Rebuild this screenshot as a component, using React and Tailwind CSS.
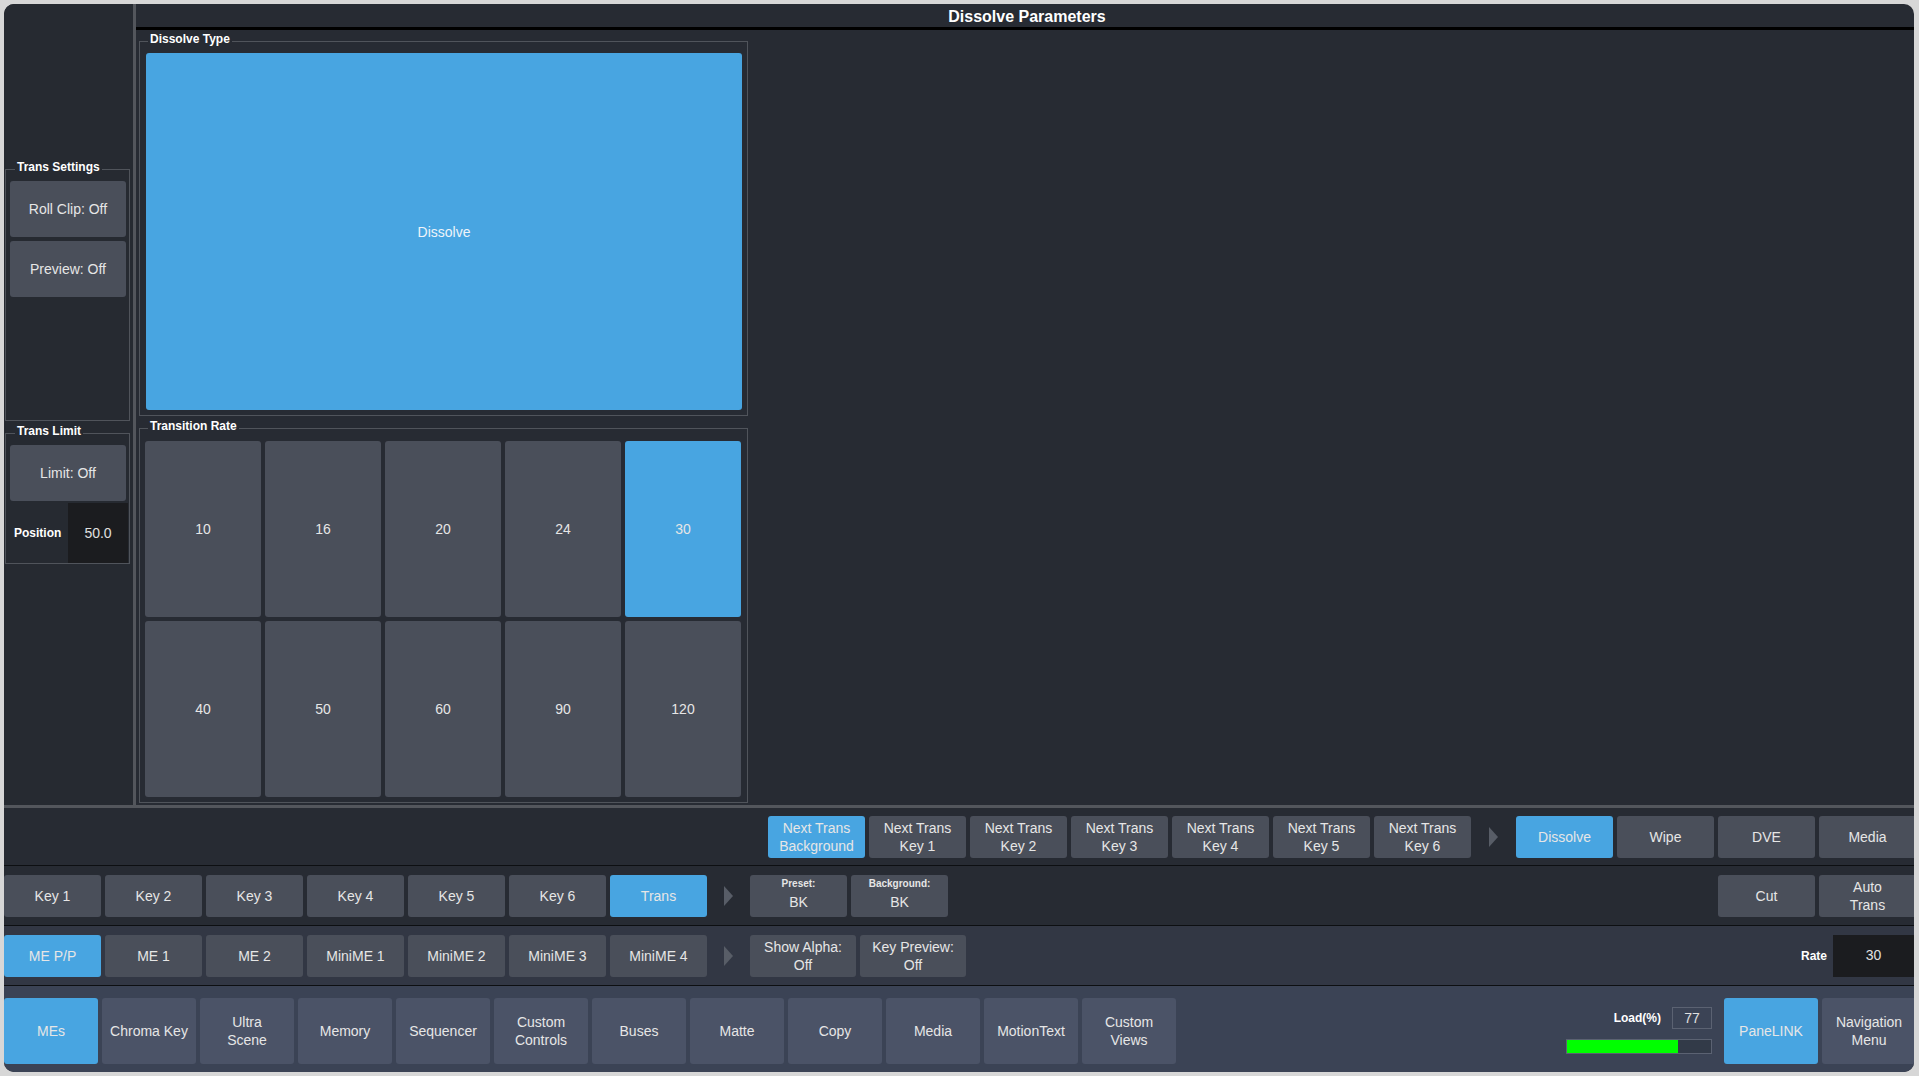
import React from "react";

const nextTrans = ["Background", "Key 1", "Key 2", "Key 3", "Key 4", "Key 5", "Key 6"];
const keys = ["Key 1", "Key 2", "Key 3", "Key 4", "Key 5", "Key 6"];
const mes = ["ME 1", "ME 2", "MiniME 1", "MiniME 2", "MiniME 3", "MiniME 4"];
const rates = [10, 16, 20, 24, 30, 40, 50, 60, 90, 120];
const menus = [
    ["Chroma Key"],
    ["Ultra", "Scene"],
    ["Memory"],
    ["Sequencer"],
    ["Custom", "Controls"],
    ["Buses"],
    ["Matte"],
    ["Copy"],
    ["Media"],
    ["MotionText"],
    ["Custom", "Views"],
];

function Btn({ children, active = false, nav = false, top = false, className = "" }) {
    const tone = active ? "bg-[#48a5e1]" : nav ? "bg-[#4b5367]" : "bg-[#4a4f5a]";
    const align = top ? "justify-start pt-[3px]" : "justify-center";
    return (
        <button
            className={`${tone} ${align} ${className} shrink-0 rounded-[3px] flex flex-col items-center text-center text-[14px] leading-[18px] text-[#e6e6e6]`}
        >
            {children}
        </button>
    );
}

function Arrow({ wide = false }) {
    return (
        <div className={`${wide ? "w-[37px]" : "w-[35px]"} shrink-0 flex items-center justify-center`}>
            <svg width="9" height="20" viewBox="0 0 9 20">
                <path d="M0 0 L9 10 L0 20 Z" fill="#585d67" />
            </svg>
        </div>
    );
}

// label sits a little above the frame line, as in the original panel
function Legend({ children, className = "" }) {
    return (
        <legend className={`${className} px-[2px] pb-[4px] text-[12px] leading-[14px] font-bold text-white`}>
            {children}
        </legend>
    );
}

export default function App() {
    return (
        <div className="w-[1919px] h-[1076px] bg-[#d7d7d7] pt-[4px] pl-[4px] font-['Liberation_Sans',Arial,sans-serif]">
            <div className="w-[1910px] h-[1068px] rounded-[10px] overflow-hidden bg-[#272b33] flex flex-col">
                {/* Upper area: side panel + parameters */}
                <div className="h-[801px] flex">
                    <aside className="w-[129px] bg-[#262a31] flex flex-col pl-[1px] pt-[156px]">
                        <fieldset className="w-[125px] h-[261px] border border-[#50545b] pl-[4px] pr-[1px] pt-[3px]">
                            <Legend className="ml-[5px]">Trans Settings</Legend>
                            <div className="flex flex-col gap-[4px]">
                                <Btn className="w-[116px] h-[56px]">Roll Clip: Off</Btn>
                                <Btn className="w-[116px] h-[56px]">Preview: Off</Btn>
                            </div>
                        </fieldset>
                        <fieldset className="mt-[3px] w-[125px] border border-[#50545b] pl-[4px] pr-[1px] pt-[3px]">
                            <Legend className="ml-[5px]">Trans Limit</Legend>
                            <Btn className="w-[116px] h-[56px]">Limit: Off</Btn>
                            <div className="mt-[2px] h-[60px] flex items-center justify-between">
                                <span className="pl-[4px] text-[12px] font-bold text-white">Position</span>
                                <div className="w-[60px] h-[60px] bg-[#1b1c1f] flex items-center justify-center text-[14px] text-[#e0e0e0]">
                                    50.0
                                </div>
                            </div>
                        </fieldset>
                    </aside>

                    <div className="w-[3px] bg-[#53565c]" />

                    <main className="flex-1 flex flex-col">
                        <div className="h-[23px] pt-[2px] pl-[4px] flex items-center justify-center text-[16px] font-bold text-white">
                            Dissolve Parameters
                        </div>
                        <div className="h-[3px] bg-black" />
                        <div className="pl-[3px] pt-[2px]">
                            <fieldset className="w-[609px] border border-[#50545b] pl-[6px] pr-[5px] pt-[3px] pb-[5px]">
                                <Legend className="ml-[2px]">Dissolve Type</Legend>
                                <button className="w-full h-[357px] pt-[2px] rounded-[3px] bg-[#48a5e1] text-[14px] text-[#eef4fa]">
                                    Dissolve
                                </button>
                            </fieldset>
                            <fieldset className="mt-[3px] w-[609px] border border-[#50545b] pl-[5px] pr-[5px] pt-[4px] pb-[5px]">
                                <Legend className="ml-[3px]">Transition Rate</Legend>
                                <div className="grid grid-cols-[repeat(5,116px)] auto-rows-[176px] gap-[4px]">
                                    {rates.map((r) => (
                                        <Btn key={r} active={r === 30} className="w-[116px] h-[176px]">
                                            {r}
                                        </Btn>
                                    ))}
                                </div>
                            </fieldset>
                        </div>
                    </main>
                </div>

                <div className="h-[3px] bg-[#53565c]" />

                {/* Row A: next transition + type */}
                <div className="h-[57px] flex items-center justify-end gap-[4px] -mr-[2px]">
                    {nextTrans.map((t, i) => (
                        <Btn key={t} active={i === 0} className="w-[97px] h-[42px]">
                            <span>Next Trans</span>
                            <span>{t}</span>
                        </Btn>
                    ))}
                    <Arrow wide />
                    <Btn active className="w-[97px] h-[42px]">Dissolve</Btn>
                    <Btn className="w-[97px] h-[42px]">Wipe</Btn>
                    <Btn className="w-[97px] h-[42px]">DVE</Btn>
                    <Btn className="w-[97px] h-[42px]">Media</Btn>
                </div>
                <div className="h-px bg-[#0d0f12]" />

                {/* Row B: keys */}
                <div className="h-[59px] flex items-center gap-[4px] -mr-[2px]">
                    {keys.map((k) => (
                        <Btn key={k} className="w-[97px] h-[42px]">{k}</Btn>
                    ))}
                    <Btn active className="w-[97px] h-[42px]">Trans</Btn>
                    <Arrow />
                    <Btn top className="w-[97px] h-[42px]">
                        <span className="text-[10px] leading-[12px] font-bold">Preset:</span>
                        <span className="mt-[3px]">BK</span>
                    </Btn>
                    <Btn top className="w-[97px] h-[42px]">
                        <span className="text-[10px] leading-[12px] font-bold">Background:</span>
                        <span className="mt-[3px]">BK</span>
                    </Btn>
                    <div className="flex-1" />
                    <Btn className="w-[97px] h-[42px]">Cut</Btn>
                    <Btn className="w-[97px] h-[42px]">
                        <span>Auto</span>
                        <span>Trans</span>
                    </Btn>
                </div>
                <div className="h-px bg-[#0d0f12]" />

                {/* Row C: MEs */}
                <div className="h-[59px] bg-[#323744] flex items-center gap-[4px]">
                    <Btn active className="w-[97px] h-[42px]">ME P/P</Btn>
                    {mes.map((m) => (
                        <Btn key={m} className="w-[97px] h-[42px]">{m}</Btn>
                    ))}
                    <Arrow />
                    <Btn className="w-[106px] h-[42px]">
                        <span>Show Alpha:</span>
                        <span>Off</span>
                    </Btn>
                    <Btn className="w-[106px] h-[42px]">
                        <span>Key Preview:</span>
                        <span>Off</span>
                    </Btn>
                    <div className="flex-1" />
                    <span className="text-[12px] font-bold text-white mr-[2px]">Rate</span>
                    <div className="w-[81px] h-[42px] bg-[#1b1c1f] flex items-center justify-center text-[14px] text-[#e0e0e0]">
                        30
                    </div>
                </div>
                <div className="h-px bg-[#0d0f12]" />

                {/* Row D: navigation */}
                <div className="flex-1 bg-[#3b4355] flex items-center gap-[4px] pt-[3px] -mr-[2px]">
                    <Btn active className="w-[94px] h-[66px]">MEs</Btn>
                    {menus.map((m, i) => (
                        <Btn key={i} nav className="w-[94px] h-[66px]">
                            {m.map((l) => (
                                <span key={l}>{l}</span>
                            ))}
                        </Btn>
                    ))}
                    <div className="flex-1" />
                    <div className="mr-[8px] flex flex-col items-end gap-[10px]">
                        <div className="flex items-center gap-[11px]">
                            <span className="text-[12px] font-bold text-white">Load(%)</span>
                            <div className="w-[40px] h-[22px] border border-[#5b6272] flex items-center justify-center text-[14px] text-[#e0e0e0]">
                                77
                            </div>
                        </div>
                        <div className="w-[146px] h-[15px] border border-[#5b6272] bg-[#323a48]">
                            <div className="h-full bg-[#00ff00]" style={{ width: "77%" }} />
                        </div>
                    </div>
                    <Btn active className="w-[94px] h-[66px]">PaneLINK</Btn>
                    <Btn nav className="w-[94px] h-[66px]">
                        <span>Navigation</span>
                        <span>Menu</span>
                    </Btn>
                </div>
            </div>
        </div>
    );
}
